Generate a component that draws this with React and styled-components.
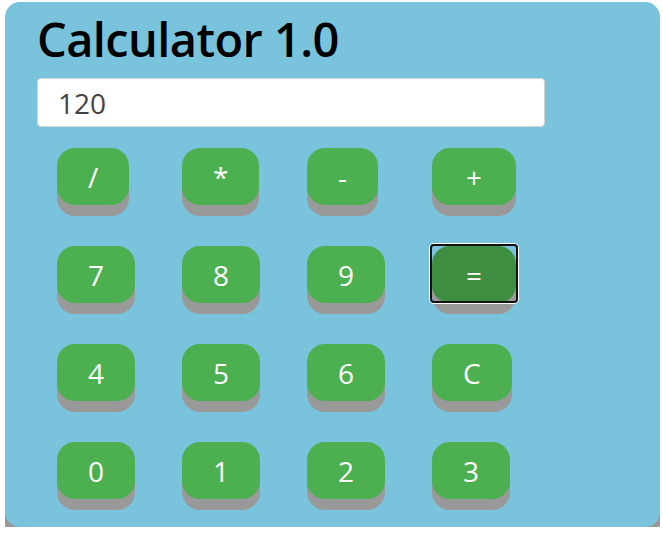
import React, { useState } from "react"
import styled, { createGlobalStyle } from "styled-components"

const Global = createGlobalStyle`
    body {
        margin: 0;
        background: #ffffff;
        font-family: "Open Sans", "Noto Sans", sans-serif;
    }
`

const keys = [
    ["/", "*", "-", "+"],
    ["7", "8", "9", "="],
    ["4", "5", "6", "C"],
    ["0", "1", "2", "3"],
]

const wide = ["+", "="]

export default function App() {
    const [display] = useState("120")

    return (
        <>
            <Global />
            <Calculator>
                <Title>Calculator 1.0</Title>
                <Display type="text" value={display} readOnly />
                <Keypad>
                    {keys.flat().map(k => (
                        <Key key={k} focused={k === "="} wide={wide.includes(k)}>
                            {k}
                        </Key>
                    ))}
                </Keypad>
            </Calculator>
        </>
    )
}

const Calculator = styled.div`
    width: 655px;
    height: 525px;
    margin: 2px 0 0 5px;
    box-sizing: border-box;
    padding: 8px 32px 0 32px;
    background: #7AC3DD;
    border-radius: 15px;
    box-shadow: 0px 12px #999999;
`

const Title = styled.h1`
    margin: 0;
    font-size: 47px;
    line-height: 58px;
    font-weight: 600;
    color: #000000;
    letter-spacing: -0.6px;
`

const Display = styled.input`
    display: block;
    margin-top: 10px;
    width: 508px;
    height: 49px;
    box-sizing: border-box;
    border: 1px solid #d4d4d4;
    border-radius: 4px;
    padding: 0 20px;
    font-family: "Open Sans", "Noto Sans", sans-serif;
    font-size: 28px;
    color: #444444;
    outline: none;
`

const Keypad = styled.div`
    display: grid;
    grid-template-columns: repeat(4, 125px);
    row-gap: 41px;
    justify-items: start;
    margin: 21px 0 0 20px;
`

const Key = styled.button`
    position: relative;
    height: 57px;
    padding: ${props => props.wide ? "0 34px" : "0 31px"};
    border: none;
    border-radius: 18px;
    background: ${props => props.focused ? "#3E8E41" : "#4CAF50"};
    color: #ffffff;
    font-family: "Open Sans", "Noto Sans", sans-serif;
    font-size: 28px;
    box-shadow: 0px 11px #999999;
    cursor: pointer;
    outline: none;
    &::after{
        content: "";
        display: ${props => props.focused ? "block" : "none"};
        position: absolute;
        inset: -2px -2px 0 -2px;
        border: 2px solid #111111;
        border-radius: 4px;
        box-shadow: 0 0 0 1px #ffffff;
        pointer-events: none;
    }
`
